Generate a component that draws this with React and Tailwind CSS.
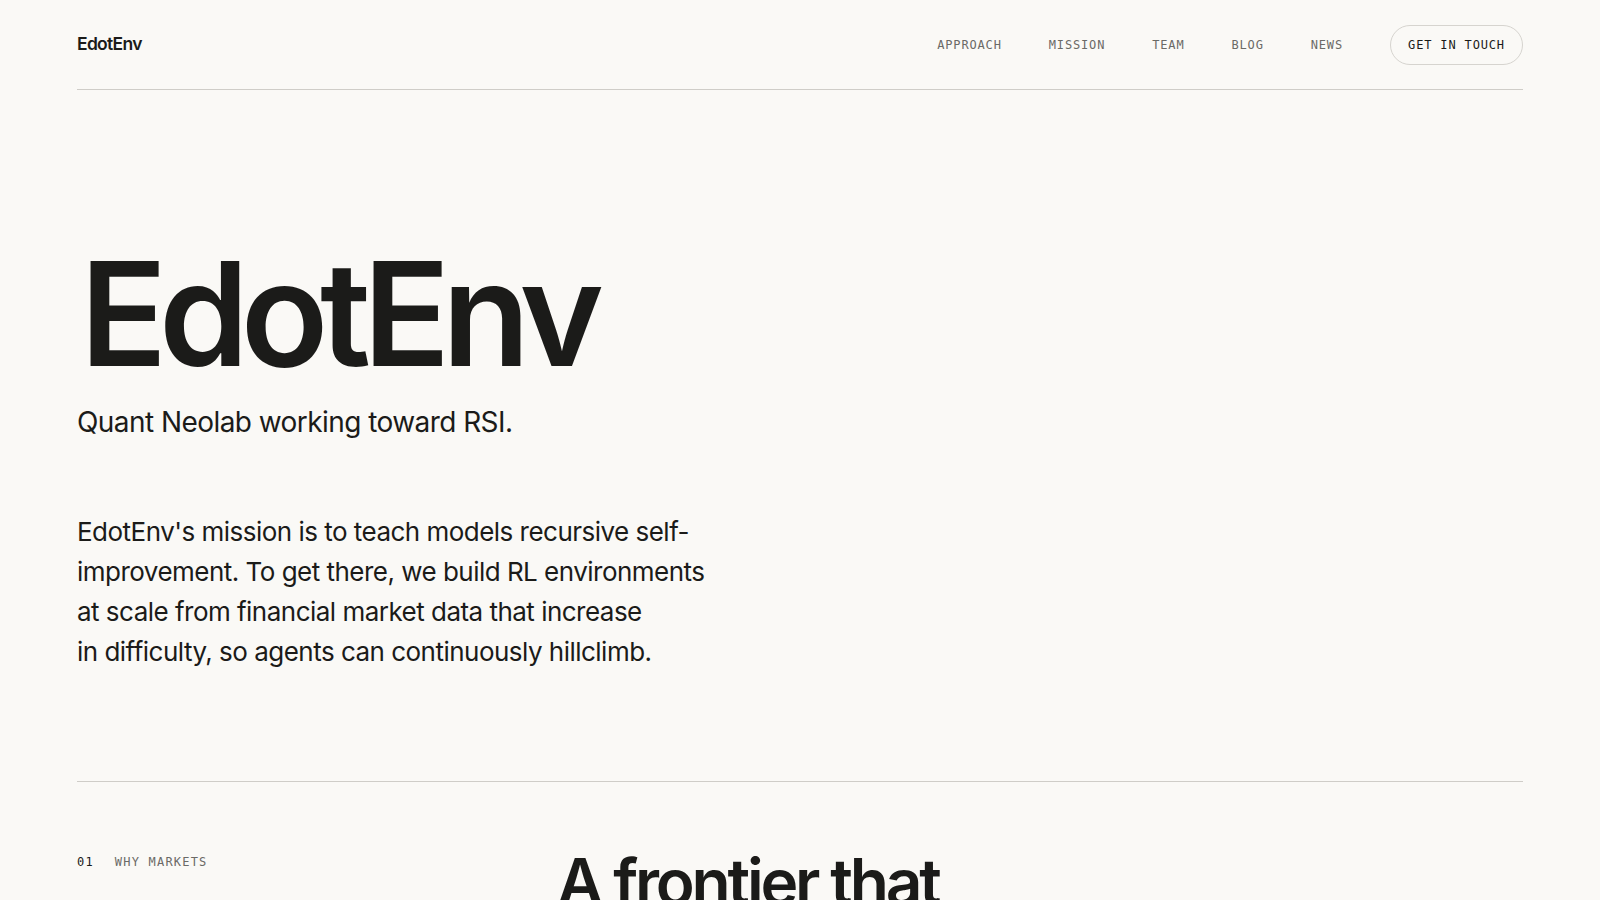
import React from 'react';

const navItems = ['Approach', 'Mission', 'Team', 'Blog', 'News'];

export default function App() {
  return (
    <div className="min-h-screen bg-[#faf9f6] text-[#1b1b19] font-['Inter',sans-serif]">
      <div className="px-[77px]">
        {/* Header */}
        <header className="flex h-[90px] items-center justify-between border-b border-[#cfcdc8]">
          <a className="text-[17.5px] font-semibold tracking-[-0.04em]">EdotEnv</a>
          <nav className="flex items-center">
            <div className="flex items-center gap-[47px] font-['DejaVu_Sans_Mono',monospace] text-[12px] tracking-[0.07em] uppercase text-[#6b6a66]">
              {navItems.map((item) => (
                <a key={item}>{item}</a>
              ))}
            </div>
            <button className="ml-[47px] h-[40px] w-[133px] rounded-full border border-[#d6d4cf] font-['DejaVu_Sans_Mono',monospace] text-[12px] tracking-[0.07em] uppercase text-[#1b1b19]">
              Get in touch
            </button>
          </nav>
        </header>

        {/* Hero */}
        <section className="pt-[152px] pb-[109px] border-b border-[#cfcdc8]">
          <h1 className="ml-[3px] text-[144px] font-semibold leading-[1] tracking-[-0.057em]">EdotEnv</h1>
          <p className="mt-[15px] text-[28px] tracking-[-0.02em]">Quant Neolab working toward RSI.</p>
          <p className="mt-[69px] text-[26px] leading-[40px] tracking-[-0.02em]">
            EdotEnv's mission is to teach models recursive self-<br />
            improvement. To get there, we build RL environments<br />
            at scale from financial market data that increase<br />
            in difficulty, so agents can continuously hillclimb.
          </p>
        </section>

        {/* Why markets */}
        <section className="grid grid-cols-[480px_1fr] pt-[68px]">
          <div className="flex gap-[21px] pt-[3px] font-['DejaVu_Sans_Mono',monospace] text-[12px] tracking-[0.1em] uppercase">
            <span className="font-medium text-[#1b1b19]">01</span>
            <span className="text-[#6b6a66]">Why markets</span>
          </div>
          <h2 className="text-[64px] font-semibold leading-[1] tracking-[-0.05em]">A frontier that</h2>
        </section>
      </div>
    </div>
  );
}
